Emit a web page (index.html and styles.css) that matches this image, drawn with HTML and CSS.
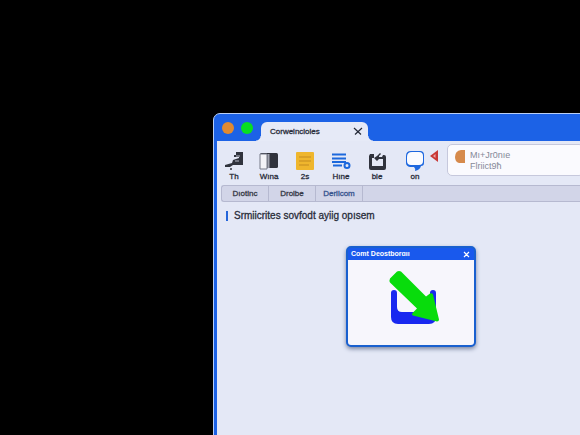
FILE: index.html
```html
<!DOCTYPE html>
<html lang="en">
<head>
<meta charset="utf-8">
<title>Corweincioies</title>
<link rel="stylesheet" href="styles.css">
</head>
<body>
<main class="window">
  <header class="titlebar">
    <button class="light light-orange" aria-label="Close window"></button>
    <button class="light light-green" aria-label="Expand window"></button>
    <div class="tab">
      <span>Corweincioies</span>
      <button class="tab-close" aria-label="Close tab"><svg width="10" height="9" viewBox="0 0 10 9"><path d="M1 1l7 6.500M9 1L2 7.500" fill="none" stroke="#252a38" stroke-width="1.200"/></svg></button>
    </div>
  </header>
  <div class="page">
    <div class="toolbar">
      <button class="tool"><svg width="20" height="20" viewBox="0 0 20 20"><path d="M12 1h7v13H9l-3 2H1v-2l7-2 1-3 3-1 3-1v-1h-5V4h2z" fill="#30333d"/><path d="M12 5h4M11 10h4" stroke="#b9bdcb"/><circle cx="7" cy="18" r="1" fill="#30333d"/></svg><span>Th</span></button>
      <button class="tool"><svg width="20" height="20" viewBox="0 0 20 20"><rect x="1" y="2" width="18" height="15" rx="1.500" fill="#30333d"/><path d="M1 3h7v15H1z" fill="#f3f3f7" stroke="#777b88"/><path d="M8.500 3h2v14h-2z" fill="#a2a5b0"/></svg><span>Wına</span></button>
      <button class="tool"><svg width="20" height="20" viewBox="0 0 20 20"><rect x="1" y="1" width="18" height="18" rx="1" fill="#efb62d"/><path d="M4 6h12M4 10h12M4 14h10" stroke="#c48b20" stroke-width="1"/></svg><span>2s</span></button>
      <button class="tool"><svg width="20" height="20" viewBox="0 0 20 20"><path d="M1 3.500h14M1 7.500h14M1 11h14M2 14.500h9" stroke="#1c68dc" stroke-width="2"/><circle cx="16" cy="14.500" r="2.500" fill="#e8ecf8" stroke="#1c68dc" stroke-width="2"/></svg><span>Hıne</span></button>
      <button class="tool"><svg width="20" height="20" viewBox="0 0 20 20"><path d="M3 3h4v4H5v8h11V8h-4l-2 2-3-3 3-2 3-3 1 1-2 2v1h3l1-2h1q2 0 2 2v11q0 2-2 2H4q-2 0-2-2V5z" fill="#30333d"/></svg><span>ble</span></button>
      <button class="tool tool-chat"><svg width="20" height="20" viewBox="0 0 20 20"><path d="M6 0h9q4 0 4 4v8q0 3-3 3-1 4-6 5 1-2-1-4H5q-4-1-4-4V5q0-5 5-5z" fill="#1d67df"/><path d="M7 1h7q4 0 4 4v5q0 4-4 4H6q-4 0-4-4V6q0-5 5-5z" fill="#fafbff"/></svg><span>on</span></button>
      <svg class="marker" width="9" height="12" viewBox="0 0 9 12"><path d="M8 0v12L0 6z" fill="#c93835"/><path d="M5.500 4v4L3 6z" fill="#eba3a5"/></svg>
      <button class="account">
        <svg width="10" height="14" viewBox="0 0 10 14"><path d="M6 0h4v13H4Q0 12 0 7q0-6 6-7z" fill="#d68a4c"/></svg>
        <span>Mı+Jr0nıe<br>Flriict9ħ</span>
      </button>
    </div>
    <nav class="strip">
      <a href="#one">Dıotinc</a>
      <a href="#two">Drolbe</a>
      <a href="#three" class="current">Deriicom</a>
    </nav>
    <h1 class="heading">Srmiicrites sovfodt ayiig opısem</h1>
  </div>
</main>
<section class="dialog">
  <header class="dialog-bar">
    <h2>Comt Deostborɑıı</h2>
    <button aria-label="Close dialog"><svg width="7" height="7" viewBox="0 0 7 7"><path d="M1 1l5 5M6 1L1 6" stroke="#fff" stroke-width="1.200"/></svg></button>
  </header>
  <div class="dialog-body">
    <svg width="52" height="56" viewBox="0 0 52 56"><path d="M3 23q0-3 3-3t3 3v14q0 5 5 5h23q5 0 5-5V23q0-3 3-3t3 3v24q0 7-7 7H10q-7 0-7-7z" fill="#1928f0"/><path d="M2 8.500L9 1.500q2-1 4 0l25 25 4-3q2-1 3 1l6 25q0 2-2 2l-24-6q-2-1 0-3l4-4L2 12.500q-1-2 0-4z" fill="#08dc0c"/></svg>
  </div>
</section>
</body>
</html>
```
FILE: styles.css
```css
* { box-sizing: border-box; }

html, body { height: 100%; }

body {
  position: relative;
  margin: 0;
  overflow: hidden;
  background: #000;
  color: #292d3a;
  font: 8px/10px "Liberation Sans", Arial, sans-serif;
}

button {
  padding: 0;
  border: 0;
  background: none;
  color: inherit;
  font: inherit;
}

svg { display: block; flex: none; }

.window {
  position: absolute;
  top: 113px;
  left: 213px;
  right: -8px;
  bottom: -8px;
  display: flex;
  flex-direction: column;
  padding: 0 3px;
  border: 1px solid #b9cff5;
  border-radius: 7px;
  background: #1c62e6;
}

.titlebar {
  display: flex;
  align-items: center;
  height: 27px;
  padding-left: 5px;
}

.light {
  width: 12px;
  height: 12px;
  margin-right: 7px;
  border-radius: 50%;
}

.light-orange { background: #e18a32; }
.light-green { background: #08df20; }

.tab {
  position: relative;
  display: flex;
  align-items: center;
  justify-content: space-between;
  align-self: flex-end;
  width: 107px;
  height: 19px;
  margin-left: 1px;
  padding: 0 5px 0 9px;
  border-radius: 6px 6px 0 0;
  background: #e6eaf7;
  -webkit-text-stroke: 0.3px;
}

.tab::before,
.tab::after {
  content: "";
  position: absolute;
  bottom: 0;
  width: 5px;
  height: 5px;
}

.tab::before {
  right: 100%;
  background: radial-gradient(circle at 0 0, transparent 4px, #e6eaf7 5px);
}

.tab::after {
  left: 100%;
  background: radial-gradient(circle at 100% 0, transparent 4px, #e6eaf7 5px);
}

.page {
  flex: 1;
  background: #e4e8f6;
}

.toolbar {
  display: flex;
  align-items: flex-start;
  height: 44px;
  padding-top: 3px;
}

.tool {
  display: flex;
  flex-direction: column;
  align-items: center;
  gap: 1px;
  width: 36px;
  padding-top: 7px;
  -webkit-text-stroke: 0.3px;
}

.tool:first-child { width: 34px; }
.tool-chat { width: 40px; }

.marker { margin: 6px 8px 0 -5px; }

.account {
  display: flex;
  flex: 1;
  align-items: flex-start;
  gap: 5px;
  height: 32px;
  padding: 5px 7px;
  border: 1px solid #c6c8dc;
  border-radius: 5px;
  background: #fafafe;
  color: #858998;
  font-size: 9px;
  line-height: 11px;
  text-align: left;
}

.strip {
  display: flex;
  height: 17px;
  margin-left: 4px;
  border: 1px solid #b6b9d0;
  border-right: 0;
  border-radius: 3px 0 0 3px;
  background: #d2d5e8;
}

.strip a {
  width: 47px;
  border-right: 1px solid #b6b9d0;
  color: #353946;
  line-height: 15px;
  text-align: center;
  text-decoration: none;
  -webkit-text-stroke: 0.3px;
}

.strip .current { color: #35538d; }

.heading {
  display: flex;
  align-items: center;
  gap: 6px;
  margin: 8px 9px;
  font-size: 10px;
  font-weight: normal;
  line-height: 12px;
  -webkit-text-stroke: 0.3px;
}

.heading::before {
  content: "";
  width: 2px;
  height: 10px;
  background: #2465da;
}

.dialog {
  position: absolute;
  top: 246px;
  left: 346px;
  width: 130px;
  border: 2px solid #1960cf;
  border-radius: 5px;
  background: #1959ed;
  box-shadow: 0 2px 4px #7b86a3;
}

.dialog-bar {
  display: flex;
  align-items: center;
  justify-content: space-between;
  height: 12px;
  padding: 0 4px 0 3px;
  color: #fff;
}

.dialog-bar h2 {
  margin: 0;
  font-size: 7px;
  line-height: 10px;
}

.dialog-body {
  display: flex;
  justify-content: center;
  padding: 10px 0 19px 6px;
  border-radius: 0 0 3px 3px;
  background: #f7f6fc;
}
```
